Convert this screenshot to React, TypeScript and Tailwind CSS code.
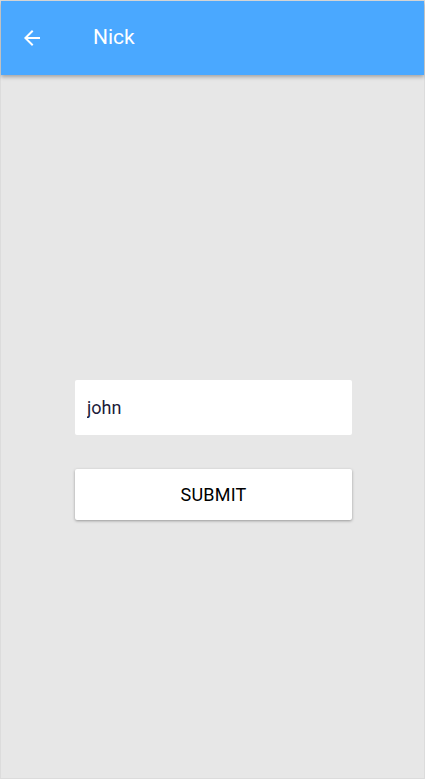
export default function App() {
  return (
    <div className="w-[425px] h-[781px] bg-white font-['Roboto',sans-serif]">
      <div className="flex flex-col h-[779px] border border-[#dcdcdc] bg-[#e7e7e7]">
        <header className="flex items-center h-[74px] bg-[#4aa8ff] text-white shadow-[0_2px_4px_rgba(0,0,0,0.3)] z-10">
          <svg viewBox="0 0 24 24" className="ml-[19px] w-[24px] h-[24px] fill-white">
            <path d="M20 11H7.83l5.59-5.59L12 4l-8 8 8 8 1.41-1.41L7.83 13H20v-2z" />
          </svg>
          <h1 className="ml-[49px] text-[21px] font-normal">Nick</h1>
        </header>
        <main className="flex-1 flex flex-col items-center gap-[34px] pt-[305px] pl-[2px]">
          <input
            defaultValue="john"
            className="w-[277px] h-[55px] bg-white px-[12px] text-[18px] text-[#1c1c3a] rounded-[2px] outline-none"
          />
          <button className="w-[277px] h-[51px] bg-white rounded-[2px] text-[18px] text-black tracking-[0.2px] shadow-[0_1px_3px_rgba(0,0,0,0.35)]">
            SUBMIT
          </button>
        </main>
      </div>
    </div>
  )
}
